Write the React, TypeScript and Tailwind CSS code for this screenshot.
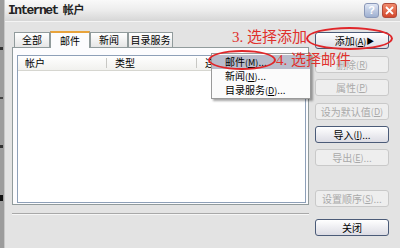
import type { ReactNode } from "react";

const cjk = "font-['Noto_Sans_CJK_SC','Noto_Sans',sans-serif]";

function Key({ k }: { k: string }) {
  return (
    <span className="text-[9px]">
      (<span className="underline">{k}</span>)
    </span>
  );
}

function Btn({
  children,
  disabled,
  className = "",
}: {
  children: ReactNode;
  disabled?: boolean;
  className?: string;
}) {
  return (
    <div
      className={`h-[17px] w-[74px] rounded-[3px] border flex items-center justify-center whitespace-nowrap text-[10px] leading-none ${
        disabled
          ? "border-[#c9c9c9] bg-[#eeeeee] text-[#a9a9a9]"
          : "border-[#4b5b78] bg-gradient-to-b from-[#ffffff] to-[#dcdce4] text-black"
      } ${className}`}
    >
      {children}
    </div>
  );
}

function Tab({ label, w, active }: { label: string; w: string; active?: boolean }) {
  return (
    <div
      className={`${w} flex items-center justify-center whitespace-nowrap text-[10px] leading-none border border-b-0 ${
        active
          ? "h-[17px] bg-[#fcfcfe] border-[#919b9c] border-t-2 border-t-[#e8a33c] -mb-px relative z-10"
          : "h-[15px] bg-gradient-to-b from-[#ffffff] to-[#e6e6e6] border-[#919b9c]"
      }`}
    >
      {label}
    </div>
  );
}

export default function App() {
  return (
    <div className={`relative w-[400px] h-[248px] overflow-hidden flex bg-[#9c9c9c] ${cjk}`}>
      {/* sliver of whatever is behind the dialog */}
      <div className="w-[4px] flex flex-col justify-around py-6">
        <div className="h-[3px] w-[3px] bg-[#333]" />
        <div className="h-[2px] w-[3px] bg-[#444]" />
        <div className="h-[3px] w-[3px] bg-[#333]" />
        <div className="h-[6px] w-[3px] bg-[#111]" />
      </div>

      <div className="flex-1 flex flex-col bg-[#e3e3e3] border-l border-[#c8c8c8]">
        {/* title bar */}
        <div className="h-[22px] flex items-center pl-[3px] pr-[3px] bg-gradient-to-b from-[#f9f9f9] via-[#ececec] to-[#d6d6d6] border-b border-[#f4f4f4]">
          <div className="flex items-baseline gap-[5px] font-bold text-[#222]">
            <span className="font-['Liberation_Mono',monospace] text-[13px] tracking-[-1.6px]">Internet</span>
            <span className="text-[11px]">帐户</span>
          </div>
          <div className="ml-auto flex gap-[3px]">
            <div className="w-[15px] h-[15px] rounded-[3px] border border-[#8a98b8] bg-gradient-to-b from-[#dfe6f4] to-[#9fb0d0] flex items-center justify-center text-white text-[11px] font-bold font-['Liberation_Sans',sans-serif]">
              ?
            </div>
            <div className="w-[15px] h-[15px] rounded-[3px] border border-[#b04a3a] bg-gradient-to-b from-[#f08a6c] to-[#d2472c] flex items-center justify-center">
              <svg width="9" height="9" viewBox="0 0 9 9">
                <path d="M1 1 L8 8 M8 1 L1 8" stroke="#fff" strokeWidth="1.8" />
              </svg>
            </div>
          </div>
        </div>

        {/* body */}
        <div className="flex-1 flex pl-[7px]">
          <div className="w-[297px] pt-[9px] flex flex-col">
            <div className="flex items-end pl-[2px]">
              <Tab label="全部" w="w-[36px]" />
              <Tab label="邮件" w="w-[40px]" active />
              <Tab label="新闻" w="w-[38px]" />
              <Tab label="目录服务" w="w-[45px]" />
            </div>
            <div className="h-[158px] border border-[#919b9c] bg-[#fcfcfe] pl-[4px] pr-[2px] pt-[7px] pb-[1px] flex">
              <div className="flex-1 border border-[#8ea0b8] bg-white flex flex-col">
                <div className="h-[15px] flex items-center text-[10px] leading-none border-b border-[#d6d6d0] bg-gradient-to-b from-[#ffffff] to-[#f1f1ee]">
                  <div className="w-[89px] pl-[7px] border-r border-[#c8c8c4] h-[10px] flex items-center">帐户</div>
                  <div className="w-[90px] pl-[8px] border-r border-[#c8c8c4] h-[10px] flex items-center">类型</div>
                  <div className="pl-[8px]">连接</div>
                </div>
              </div>
            </div>
            <div className="mt-[8px] h-[2px] border-t border-[#a8a8a8] border-b border-b-[#f6f6f6]" />
          </div>

          <div className="flex flex-col pl-[6px] pt-[10px]">
            <Btn className="justify-between pl-[10px] pr-[5px]">
              <span>
                添加<Key k="A" />
              </span>
              <span className="text-[8px]">▶</span>
            </Btn>
            <Btn disabled className="mt-[7px]">
              删除<Key k="R" />
            </Btn>
            <Btn disabled className="mt-[6px]">
              属性<Key k="P" />
            </Btn>
            <Btn disabled className="mt-[7px]">
              设为默认值<Key k="D" />
            </Btn>
            <Btn className="mt-[6px]">
              导入<Key k="I" />...
            </Btn>
            <Btn disabled className="mt-[6px]">
              导出<Key k="E" />...
            </Btn>
            <Btn disabled className="mt-[24px]">
              设置顺序<Key k="S" />...
            </Btn>
            <Btn className="mt-[12px]">关闭</Btn>
          </div>
        </div>
      </div>

      {/* popup menu from 添加 */}
      <div className="absolute left-[211px] top-[53px] w-[100px] border border-[#9a9a9a] bg-[#fbfbfb] py-[1px] text-[10px] leading-none shadow-[2px_2px_2px_rgba(0,0,0,0.35)] flex flex-col">
        <div className="h-[14px] flex items-center pl-[13px] bg-[#b9bccb]">
          邮件<Key k="M" />...
        </div>
        <div className="h-[14px] flex items-center pl-[13px]">
          新闻<Key k="N" />...
        </div>
        <div className="h-[14px] flex items-center pl-[13px]">
          目录服务<Key k="D" />...
        </div>
      </div>

      {/* red annotations */}
      <div className="absolute left-[306px] top-[27px] w-[87px] h-[23px] rounded-[50%] border-2 border-[#e0262a]" />
      <div className="absolute left-[208px] top-[50px] w-[68px] h-[20px] rounded-[50%] border-2 border-[#e0262a]" />
      <div className="absolute left-[232px] top-[30px] text-[15px] leading-none text-[#e0302c] font-['Liberation_Serif','Noto_Sans_CJK_SC',serif]">
        3. 选择添加
      </div>
      <div className="absolute left-[276px] top-[53px] text-[15px] leading-none text-[#e0302c] font-['Liberation_Serif','Noto_Sans_CJK_SC',serif]">
        4. 选择邮件
      </div>
    </div>
  );
}
